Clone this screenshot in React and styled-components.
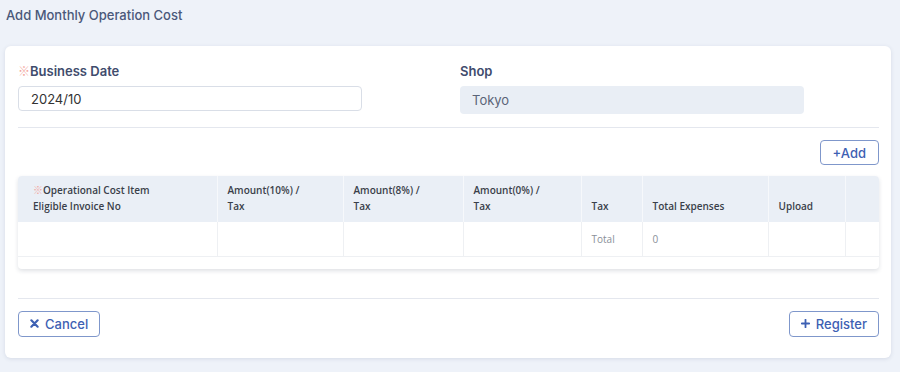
import React from "react";
import styled, { createGlobalStyle } from "styled-components";

const Global = createGlobalStyle`
  html, body { margin: 0; padding: 0; background: #eef2f9; }
  body { font-family: "Inter", "Noto Sans", sans-serif; }
  * { box-sizing: border-box; }
`;

const Page = styled.div`
  width: 900px;
  height: 372px;
  padding: 0 9px 14px 5px;
  background: #eef2f9;
`;

const Title = styled.h1`
  margin: 0;
  height: 46px;
  padding: 6px 0 0 1px;
  font-size: 13px;
  font-weight: 500;
  color: #4a587a;
  line-height: 18px;
`;

const Card = styled.div`
  background: #fff;
  border-radius: 6px;
  box-shadow: 0 1px 4px rgba(40, 60, 100, 0.12);
  padding: 16px 12px 21px 13px;
`;

const FormGrid = styled.div`
  display: grid;
  grid-template-columns: 344px 344px;
  column-gap: 98px;
`;

const Field = styled.div`
  display: flex;
  flex-direction: column;
`;

const Label = styled.label`
  font-size: 13px;
  font-weight: 600;
  color: #3f4c6d;
  line-height: 18px;
  margin-bottom: 6px;
  display: flex;
  align-items: center;
`;

const Req = styled.span`
  color: #f3a79e;
  font-family: "Noto Sans CJK JP", sans-serif;
  font-weight: 400;
  font-size: ${(p) => p.$size || "11px"};
  margin-right: 0;
`;

const Input = styled.div`
  height: ${(p) => (p.$readonly ? "28px" : "25px")};
  border: ${(p) => (p.$readonly ? "none" : "1px solid #d9dee7")};
  background: ${(p) => (p.$readonly ? "#e9eef5" : "#fff")};
  border-radius: 4px;
  padding: 0 12px;
  display: flex;
  align-items: center;
  font-size: 13px;
  color: ${(p) => (p.$readonly ? "#5a6478" : "#333")};
`;

const Divider = styled.hr`
  border: none;
  border-top: 1px solid #e4e7ee;
  margin: ${(p) => p.$m || "0"};
`;

const ToolRow = styled.div`
  display: flex;
  justify-content: flex-end;
  margin-top: 12px;
`;

const Button = styled.button`
  height: ${(p) => p.$h || "26px"};
  border: 1px solid #7f97cb;
  background: #fff;
  border-radius: 4px;
  color: #3d60b3;
  font-family: "Inter", "Noto Sans", sans-serif;
  font-size: 13px;
  font-weight: 500;
  padding: 0 ${(p) => p.$px || "11px"};
  display: inline-flex;
  align-items: center;
  gap: ${(p) => p.$gap || "6px"};
  cursor: pointer;
`;

const TableWrap = styled.div`
  margin-top: 11px;
  border-radius: 4px;
  box-shadow: 0 2px 4px rgba(30, 40, 70, 0.14);
  padding-bottom: 12px;
  background: #fff;
  overflow: hidden;
`;

const Table = styled.table`
  width: 100%;
  border-collapse: collapse;
  table-layout: fixed;
  font-family: "Open Sans", "Noto Sans", sans-serif;
  font-size: 10px;
`;

const Th = styled.th`
  background: #eaeff6;
  height: 46px;
  vertical-align: bottom;
  text-align: left;
  font-weight: 600;
  color: #3a3f4a;
  line-height: 16px;
  padding: 0 6px 8px ${(p) => p.$pl || "10px"};
  border-left: 1px solid #f6f8fb;
  &:first-child { border-left: none; }
`;

const Td = styled.td`
  height: 34px;
  color: #8a8f98;
  padding: 0 10px;
  border-left: 1px solid #eef0f3;
  border-bottom: 1px solid #eef0f3;
  &:first-child { border-left: none; }
`;

const Footer = styled.div`
  display: flex;
  justify-content: space-between;
  padding-left: 0;
`;

const cols = [199, 126, 120, 118, 61, 126, 77, 34];

export default function App() {
  return (
    <Page>
      <Global />
      <Title>Add Monthly Operation Cost</Title>
      <Card>
        <FormGrid>
          <Field>
            <Label>
              <Req $size="12px">※</Req>Business Date
            </Label>
            <Input>2024/10</Input>
          </Field>
          <Field>
            <Label>Shop</Label>
            <Input $readonly>Tokyo</Input>
          </Field>
        </FormGrid>
        <Divider $m="13px 0 0" />
        <ToolRow>
          <Button $h="25px" $px="12px" $gap="0">+Add</Button>
        </ToolRow>
        <TableWrap>
          <Table>
            <colgroup>
              {cols.map((w, i) => (
                <col key={i} style={{ width: w }} />
              ))}
            </colgroup>
            <thead>
              <tr>
                <Th $pl="15px">
                  <Req $size="10px">※</Req>Operational Cost Item
                  <br />
                  Eligible Invoice No
                </Th>
                <Th>
                  Amount(10%) /<br />
                  Tax
                </Th>
                <Th>
                  Amount(8%) /<br />
                  Tax
                </Th>
                <Th>
                  Amount(0%) /<br />
                  Tax
                </Th>
                <Th>Tax</Th>
                <Th>Total Expenses</Th>
                <Th>Upload</Th>
                <Th />
              </tr>
            </thead>
            <tbody>
              <tr>
                <Td />
                <Td />
                <Td />
                <Td />
                <Td>Total</Td>
                <Td>0</Td>
                <Td />
                <Td />
              </tr>
            </tbody>
          </Table>
        </TableWrap>
        <Divider $m="29px 0 12px" />
        <Footer>
          <Button>
            <svg width="9" height="9" viewBox="0 0 10 10">
              <path d="M1.5 1.5 L8.5 8.5 M8.5 1.5 L1.5 8.5" stroke="#3d60b3" strokeWidth="2.4" strokeLinecap="round" />
            </svg>
            Cancel
          </Button>
          <Button>
            <svg width="9" height="9" viewBox="0 0 10 10">
              <path d="M5 0.8 V9.2 M0.8 5 H9.2" stroke="#3d60b3" strokeWidth="2" strokeLinecap="round" />
            </svg>
            Register
          </Button>
        </Footer>
      </Card>
    </Page>
  );
}
